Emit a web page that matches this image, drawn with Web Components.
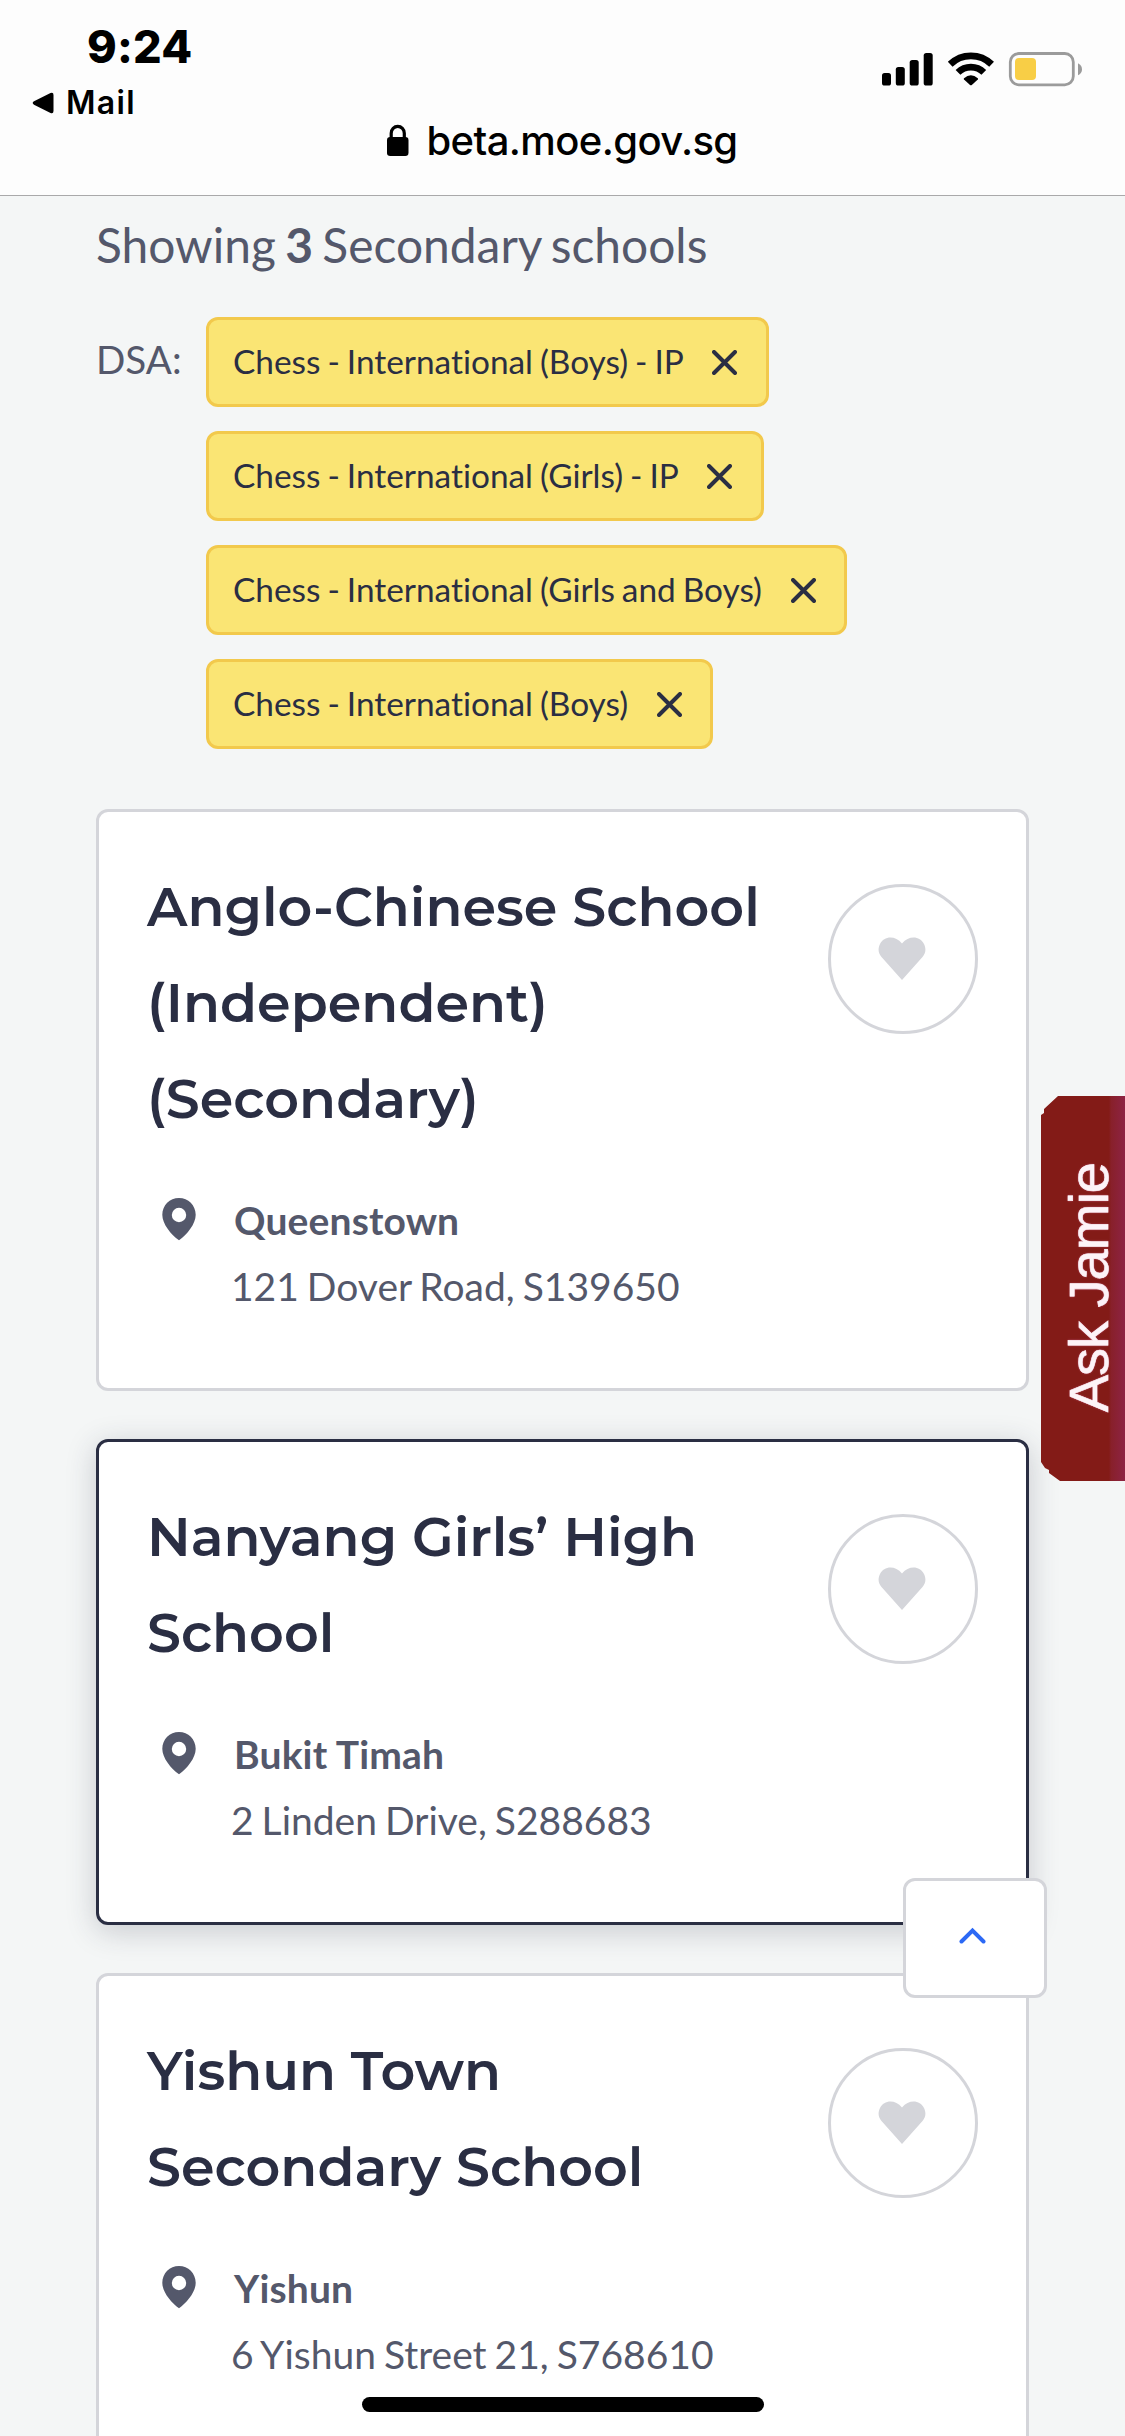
<!DOCTYPE html>
<html lang="en">
<head>
<meta charset="utf-8">
<title>Secondary schools</title>
<style>
  html, body { margin: 0; padding: 0; }
  body { width: 1125px; height: 2436px; overflow: hidden; background: #f4f6f6; font-family: Lato, "Liberation Sans", sans-serif; font-variant-ligatures: none; }
</style>
</head>
<body>
<school-finder>
  <browser-bar slot="bar" time="9:24" back="Mail" host="beta.moe.gov.sg"></browser-bar>
  <result-summary slot="summary" count="3">Secondary schools</result-summary>
  <filter-list slot="filters" label="DSA:">
    <filter-tag>Chess - International (Boys) - IP</filter-tag>
    <filter-tag>Chess - International (Girls) - IP</filter-tag>
    <filter-tag>Chess - International (Girls and Boys)</filter-tag>
    <filter-tag>Chess - International (Boys)</filter-tag>
  </filter-list>
  <school-card>
    <span slot="name">Anglo-Chinese School (Independent) (Secondary)</span>
    <span slot="area">Queenstown</span>
    <span slot="address">121 Dover Road, S139650</span>
  </school-card>
  <school-card active>
    <span slot="name">Nanyang Girls’ High School</span>
    <span slot="area">Bukit Timah</span>
    <span slot="address">2 Linden Drive, S288683</span>
  </school-card>
  <school-card>
    <span slot="name">Yishun Town Secondary School</span>
    <span slot="area">Yishun</span>
    <span slot="address">6 Yishun Street 21, S768610</span>
  </school-card>
  <chat-tab slot="overlay">Ask Jamie</chat-tab>
  <to-top slot="overlay"></to-top>
  <home-indicator slot="overlay"></home-indicator>
</school-finder>

<script>
const define = (name, render) => customElements.define(name, class extends HTMLElement {
  constructor() {
    super();
    this.attachShadow({ mode: "open" });
  }
  connectedCallback() {
    this.shadowRoot.innerHTML = render(this);
  }
});

define("school-finder", () => `
  <style>
    :host { display: flex; flex-direction: column; position: relative; width: 1125px; height: 2436px; overflow: hidden; background: #f4f6f6; }
    main { flex: 1; min-height: 0; overflow: hidden; padding: 13px 96px 0; display: flex; flex-direction: column; }
    .filters { margin-top: 36px; }
    .cards { margin-top: 60px; display: flex; flex-direction: column; gap: 48px; }
  </style>
  <slot name="bar"></slot>
  <main>
    <slot name="summary"></slot>
    <div class="filters"><slot name="filters"></slot></div>
    <div class="cards"><slot></slot></div>
  </main>
  <slot name="overlay"></slot>`);

define("browser-bar", el => `
  <style>
    :host { display: flex; flex-direction: column; flex: none; box-sizing: border-box; height: 196px; border-bottom: 1px solid #a9a9aa; background: #fdfdfd; color: #000; font-family: Inter, "Liberation Sans", sans-serif; }
    .status { display: flex; justify-content: space-between; height: 116px; }
    .left { display: flex; flex-direction: column; padding-top: 21px; }
    .time { font-size: 45px; font-weight: 800; line-height: 52px; letter-spacing: .2px; padding-left: 87px; }
    .back { display: flex; align-items: center; gap: 11px; padding-left: 32px; font-size: 32px; font-weight: 600; line-height: 38px; letter-spacing: 1.3px; margin-top: 11px; }
    .right { display: flex; padding: 52px 43px 0 0; height: 34px; }
    svg { display: block; flex: none; }
    .url { display: flex; justify-content: center; gap: 17px; font-size: 40px; font-weight: 500; line-height: 48px; letter-spacing: -.6px; }
    .url svg { margin-top: 8px; }
    .url span { margin-top: 1px; }
  </style>
  <div class="status">
    <div class="left">
      <div class="time">${el.getAttribute("time")}</div>
      <div class="back">
        <svg width="23" height="24" viewBox="0 0 23 24"><path d="M2 10.3 18.5 2Q21.5 .8 21.5 4V20Q21.5 23.2 18.5 22L2 13.7Q-.6 12 2 10.3Z"/></svg>
        <span>${el.getAttribute("back")}</span>
      </div>
    </div>
    <div class="right">
      <svg width="200" height="35" viewBox="0 0 200 35">
        <rect x="0" y="21" width="9" height="12.500" rx="2.600"/>
        <rect x="13.800" y="15" width="9" height="18.500" rx="2.600"/>
        <rect x="27.700" y="8" width="9" height="25.500" rx="2.600"/>
        <rect x="41.700" y="1" width="9" height="32.500" rx="2.600"/>
        <g fill="none" stroke="#000" stroke-width="6.800">
          <path d="M68.200 12.300A29.600 29.600 0 0 1 109.600 12.300"/>
          <path d="M76 20.400A18.400 18.400 0 0 1 101.800 20.400"/>
        </g>
        <path d="M82 26.200Q88.900 20.400 95.800 26.200Q96.400 27 95.800 27.600L89.800 33Q88.900 33.700 88 33L82 27.600Q81.400 27 82 26.200Z"/>
        <rect x="128.300" y="1.500" width="63" height="31.300" rx="8.500" fill="none" stroke="#9b9b9b" stroke-width="2.800"/>
        <rect x="133" y="6" width="21" height="22" rx="4" fill="#f8ce46"/>
        <path d="M196 11.200Q200 13.200 200 17.200T196 23.200Z" fill="#9b9b9b"/>
      </svg>
    </div>
  </div>
  <div class="url">
    <svg width="22" height="33" viewBox="0 0 22 33"><rect x="0" y="13" width="21.500" height="19" rx="3.200"/><path d="M4.200 14.500V9.200a6.550 6.800 0 0 1 13.100 0V14.500" fill="none" stroke="#000" stroke-width="3.200"/></svg>
    <span>${el.getAttribute("host")}</span>
  </div>`);

define("result-summary", el => `
  <style>
    :host { display: block; font-size: 47.900px; line-height: 72px; color: #54586b; word-spacing: -2.900px; white-space: nowrap; }
  </style>
  Showing <b>${el.getAttribute("count")}</b> <slot></slot>`);

define("filter-list", el => `
  <style>
    :host { display: flex; align-items: flex-start; }
    .label { flex: none; width: 110px; padding-top: 9px; font-size: 38.600px; line-height: 66px; color: #54586b; }
    .tags { display: flex; flex-direction: column; align-items: flex-start; gap: 24px; }
  </style>
  <div class="label">${el.getAttribute("label")}</div>
  <div class="tags"><slot></slot></div>`);

define("filter-tag", () => `
  <style>
    :host { display: flex; align-items: center; gap: 28.500px; box-sizing: border-box; height: 90px; padding: 0 28.500px 0 24px; border: 3px solid #f2c94c; border-radius: 12px; background: #fae574; color: #2a2e43; font-size: 33.400px; line-height: 50px; word-spacing: -1.600px; white-space: nowrap; }
    span { padding-bottom: 2px; }
    svg { display: block; }
  </style>
  <span><slot></slot></span>
  <svg width="25" height="25" viewBox="0 0 25 25"><path d="M2 2 23 23M23 2 2 23" stroke="#2a2e43" stroke-width="4" stroke-linecap="round"/></svg>`);

define("school-card", () => `
  <style>
    :host { display: flex; flex-direction: column; gap: 40px; box-sizing: border-box; width: 933px; padding: 47px 48px 69px; border: 3px solid #d4d5da; border-radius: 12px; background: #fff; }
    :host([active]) { border-color: #2a2e43; box-shadow: 0 6px 30px rgba(42, 46, 67, .22); }
    .top { display: flex; justify-content: space-between; align-items: flex-start; }
    h2 { margin: 0; width: 650px; font: 600 54px/96px Montserrat, Inter, sans-serif; color: #2a2e43; }
    .heart { display: flex; flex: none; align-items: center; justify-content: center; box-sizing: border-box; width: 150px; height: 150px; margin-top: 25px; padding: 0 2px 1px 0; border: 3px solid #d4d5da; border-radius: 50%; }
    .place { display: flex; gap: 36px; padding-left: 15px; font-size: 39px; line-height: 66px; color: #54586b; }
    .place svg { margin-top: 11px; flex: none; }
    .area { font-weight: 700; padding-left: 2px; letter-spacing: .15px; }
    .address { word-spacing: -2px; margin-left: -1px; }
    svg { display: block; }
  </style>
  <div class="top">
    <h2><slot name="name"></slot></h2>
    <div class="heart">
      <svg width="48" height="43" viewBox="0 0 48 43"><path d="M24 6.600C31 -2 42 -1 46 7C48.500 12.500 47.500 16.500 44.500 20L24 43L3.500 20C.5 16.500 -.5 12.500 2 7C6 -1 17 -2 24 6.600Z" fill="#d4d5da"/></svg>
    </div>
  </div>
  <div class="place">
    <svg width="34" height="43" viewBox="0 0 34 43"><path fill="#54586b" fill-rule="evenodd" d="M17 0C26.300 0 33.700 7.400 33.700 16.700C33.700 26 25 36.500 17 42.200C9 36.500 .3 26 .3 16.700C.3 7.400 7.700 0 17 0ZM17 9.800a7.200 7.200 0 1 0 0 14.400a7.200 7.200 0 1 0 0-14.400Z"/></svg>
    <div>
      <div class="area"><slot name="area"></slot></div>
      <div class="address"><slot name="address"></slot></div>
    </div>
  </div>`);

define("chat-tab", () => `
  <style>
    :host { position: absolute; right: 0; top: 1096px; width: 84px; height: 385px; box-sizing: border-box; display: flex; justify-content: flex-end; align-items: flex-end; padding-bottom: 69px;
      background: linear-gradient(90deg, #831b17 0 68px, #88202a 70px, #8d2344 84px); clip-path: polygon(17px 0, 100% 0, 100% 100%, 19px 100%, 8px 377px, 8px 374px, 4px 372px, 0 366px, 0 19px, 3px 17px, 3px 13px); }
    span { writing-mode: vertical-rl; transform: rotate(180deg); font: 400 56px/72px "Liberation Sans", Arial, sans-serif; letter-spacing: -1px; color: #fdf3f7; -webkit-text-stroke: .6px #fdf3f7; text-shadow: 0 0 2px #d0668e; white-space: nowrap; }
  </style>
  <span><slot></slot></span>`);

define("to-top", () => `
  <style>
    :host { position: absolute; left: 903px; top: 1878px; width: 144px; height: 120px; box-sizing: border-box; display: flex; align-items: center; justify-content: center; padding: 0 5px 5px 0; border: 3px solid #d4d5da; border-radius: 12px; background: #fff; }
    svg { display: block; }
  </style>
  <svg width="28" height="17" viewBox="0 0 28 17"><path d="M2.500 14.500 13.500 3.500 24.500 14.500" fill="none" stroke="#2c69f5" stroke-width="4" stroke-linecap="round"/></svg>`);

define("home-indicator", () => `
  <style>
    :host { position: absolute; left: 362px; top: 2397px; width: 402px; height: 15px; border-radius: 8px; background: #000; }
  </style>`);
</script>
</body>
</html>
